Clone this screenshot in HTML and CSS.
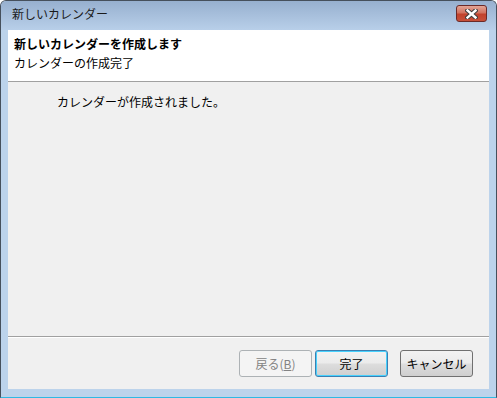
FILE: index.html
```html
<!DOCTYPE html>
<html lang="ja">
<head>
    <meta charset="UTF-8">
    <title>新しいカレンダー</title>
    <link rel="stylesheet" href="styles.css">
</head>
<body>
    <div class="window">
        <div class="titlebar">
            <span class="title">新しいカレンダー</span>
            <div class="close-btn">
                <svg width="13" height="10" viewBox="0 0 13 10">
                    <path d="M2.5 1.5 L10.5 8.5 M10.5 1.5 L2.5 8.5" stroke="#3d3d3d" stroke-width="4.4" stroke-linecap="square" fill="none"/>
                    <path d="M2.5 1.5 L10.5 8.5 M10.5 1.5 L2.5 8.5" stroke="#ffffff" stroke-width="2.4" stroke-linecap="square" fill="none"/>
                </svg>
            </div>
        </div>
        <div class="client">
            <div class="header">
                <div class="header-title">新しいカレンダーを作成します</div>
                <div class="header-sub">カレンダーの作成完了</div>
            </div>
            <div class="content">
                <p class="message">カレンダーが作成されました。</p>
            </div>
            <div class="footer">
                <button class="btn btn-disabled">戻る(<u>B</u>)</button>
                <button class="btn btn-default">完了</button>
                <button class="btn btn-cancel">キャンセル</button>
            </div>
        </div>
    </div>
</body>
</html>
```

FILE: styles.css
```css
body {
    margin: 0;
    font-family: "Noto Sans CJK JP", "Noto Sans", sans-serif;
    font-size: 12px;
    color: #000;
    background: #fff;
}

.window {
    width: 497px;
    height: 398px;
    box-sizing: border-box;
    border: 1px solid #46505c;
    border-bottom-color: #2fb9e3;
    border-radius: 6px 6px 0 0;
    background: #bcd3eb;
    display: flex;
    flex-direction: column;
}

.titlebar {
    height: 29px;
    flex-shrink: 0;
    display: flex;
    align-items: center;
    justify-content: space-between;
    padding: 0 9px 0 11px;
    background: linear-gradient(#97b0cf, #b8cfe9);
    border-radius: 5px 5px 0 0;
}

.title {
    font-size: 12px;
    color: #1a1a1a;
    margin-top: -4px;
}

.close-btn {
    width: 31px;
    height: 17px;
    box-sizing: border-box;
    margin-top: -4px;
    border: 1px solid #6b2a28;
    border-radius: 3px;
    background: linear-gradient(#e3a596 0%, #d27360 45%, #c2422c 55%, #c6503a 100%);
    display: flex;
    align-items: center;
    justify-content: center;
}

.client {
    flex: 1;
    margin: 0 7px 8px 7px;
    background: #f0f0f0;
    display: flex;
    flex-direction: column;
}

.header {
    height: 51px;
    flex-shrink: 0;
    background: #fff;
    border-bottom: 1px solid #a0a0a0;
    padding-left: 6px;
}

.header-title {
    font-weight: bold;
    margin-top: 5px;
    line-height: 18px;
}

.header-sub {
    line-height: 18px;
    margin-top: 1px;
}

.content {
    flex: 1;
    border-bottom: 1px solid #a0a0a0;
}

.message {
    margin: 11px 0 0 49px;
    line-height: 18px;
}

.footer {
    height: 52px;
    flex-shrink: 0;
    border-top: 1px solid #fff;
    box-sizing: border-box;
    display: flex;
    justify-content: flex-end;
    align-items: flex-start;
    padding: 12px 16px 0 0;
}

.btn {
    width: 73px;
    height: 27px;
    box-sizing: border-box;
    font-family: "Noto Sans CJK JP", "Noto Sans", sans-serif;
    font-size: 12px;
    color: #000;
    border-radius: 3px;
    padding: 0;
    border: 1px solid #707070;
    background: linear-gradient(#f2f2f2 0%, #ebebeb 48%, #dddddd 52%, #cfcfcf 100%);
}

.btn-disabled {
    color: #838383;
    border-color: #adb2b5;
    background: #f4f4f4;
    margin-right: 3px;
}

.btn-default {
    border-color: #3c7fb1;
    box-shadow: inset 0 0 0 1px #48d1fd;
    margin-right: 12px;
}
```
